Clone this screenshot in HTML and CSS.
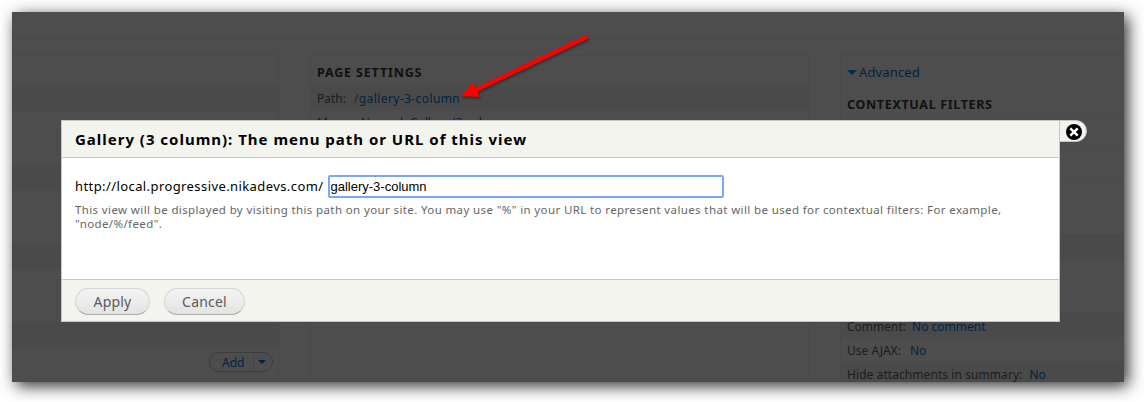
FILE: index.html
```html
<!DOCTYPE html>
<html lang="en">
<head>
<meta charset="utf-8">
<title>Gallery (3 column)</title>
<link rel="stylesheet" href="styles.css">
</head>
<body>
<div class="frame">
  <div class="topbar"></div>
  <div class="columns">
    <section class="col col-left">
      <div class="row head"></div>
      <div class="row odd"></div><div class="row tall"></div>
      <div class="row odd"></div><div class="row tall"></div>
      <div class="row odd"></div><div class="row tall"></div>
      <div class="row odd"></div>
      <div class="actions"><div class="add"><span class="add-label">Add</span><span class="add-more"><i class="caret small"></i></span></div></div>
    </section>
    <section class="col col-mid">
      <h3 class="col-title">PAGE SETTINGS</h3>
      <div class="setting odd"><span>Path:</span><a class="link path-link"><span class="slash">/</span>gallery-3-column</a></div>
      <div class="setting"><span>Menu:</span><a class="link">Normal: Gallery (3 colu</a></div>
    </section>
    <section class="col col-right">
      <div class="advanced"><i class="caret"></i><a class="link">Advanced</a></div>
      <h3 class="col-subtitle">CONTEXTUAL FILTERS</h3>
      <div class="filler f1"></div><div class="filler f2"></div><div class="filler f3"></div>
      <div class="setting odd exposed"><a class="link">Settings</a></div>
      <div class="filler f4"></div>
      <div class="setting odd comment"><span>Comment:</span><a class="link">No comment</a></div>
      <div class="setting ajax"><span>Use AJAX:</span><a class="link">No</a></div>
      <div class="setting odd hide"><span>Hide attachments in summary:</span><a class="link">No</a></div>
    </section>
  </div>
</div>

<svg class="arrow" width="140" height="76" viewBox="0 0 140 76">
  <path d="M1 66.300L12.700 52.300L15.200 57.800L126.300 4.700L128.400 8.500L17.500 61.500L19.600 66.800Z" fill="#f00"/>
</svg>

<div class="dialog">
  <header class="dialog-head"><h1>Gallery (3 column): The menu path or URL of this view</h1></header>
  <div class="dialog-body">
    <div class="field"><label>http://local.progressive.nikadevs.com/</label><input class="path-input" type="text" value="gallery-3-column"></div>
    <p class="help">This view will be displayed by visiting this path on your site. You may use "%" in your URL to represent values that will be used for contextual filters: For example,<br>"node/%/feed".</p>
  </div>
  <footer class="dialog-foot">
    <button class="btn apply">Apply</button>
    <button class="btn cancel">Cancel</button>
  </footer>
  <div class="close">
    <svg width="16" height="16" viewBox="0 0 16 16"><circle cx="8" cy="8" r="8" fill="#000"/><path d="M4.300 4.300L11.700 11.700M11.700 4.300L4.300 11.700" stroke="#fff" stroke-width="2.400"/></svg>
  </div>
</div>
</body>
</html>
```
FILE: styles.css
```css
* { box-sizing: border-box; }
body { margin: 0; width: 1144px; height: 402px; padding: 12px 20px 20px 12px; background: #fff; overflow: hidden; position: relative; font-family: "Noto Sans", "Open Sans", sans-serif; }
h1, h3, p { margin: 0; }
.frame { width: 1112px; height: 370px; background: #4d4d4d; box-shadow: 4px 4px 15px rgba(0,0,0,.82); display: flex; flex-direction: column; overflow: hidden; }
.topbar { height: 28px; border-bottom: 1px solid #494949; margin-bottom: 15px; flex: none; }
.columns { display: grid; grid-template-columns: 267px 499px 284px; column-gap: 31px; height: 327px; }
.col { border: 1px solid #494949; border-bottom: 0; font-size: 12px; color: #1c1c1c; overflow: hidden; white-space: nowrap; }
.col-left { border-left: 0; }
.col-right { border-right: 0; }
.row { height: 25px; }
.row.head { height: 30px; }
.row.tall { height: 54px; }
.odd { background: #4a4a4a; }
.actions { display: flex; justify-content: flex-end; padding: 4px 5px 0 0; }
.add { width: 64px; height: 20px; border: 1px solid #3d3d3d; border-radius: 10px; display: flex; align-items: center; color: #00233f; font-size: 12px; line-height: 17px; }
.add-label { width: 43px; padding-left: 12px; }
.add-more { border-left: 1px solid #424242; height: 14px; width: 18px; display: flex; align-items: center; padding-left: 4px; }
.caret { display: inline-block; border: 5px solid transparent; border-top-color: #00304b; border-bottom: 0; }
.caret.small { border-width: 4px 4px 0; border-top-color: #00233f; }
.col-title { font-size: 12.500px; letter-spacing: .84px; line-height: 17px; padding: 8px 0 5px 6px; height: 30px; color: #111; }
.setting { height: 24px; line-height: 26px; padding-left: 6px; display: flex; gap: 8px; }
.link { color: #00233f; }
.path-link { letter-spacing: .4px; }
.slash { color: #222; }
.advanced { display: flex; align-items: center; gap: 2px; height: 32px; padding-left: 6px; font-size: 13px; letter-spacing: .15px; }
.col-subtitle { font-size: 12.500px; letter-spacing: .67px; line-height: 17px; height: 31px; padding: 8px 0 0 6px; color: #111; border-bottom: 1px solid #494949; }
.filler { border-bottom: 1px solid #494949; }
.f1 { height: 31px; }
.f2 { height: 31px; }
.f3 { height: 54px; }
.exposed { padding-left: 173px; height: 25px; }
.f4 { height: 54px; }
.comment { gap: 6px; }
.ajax { gap: 9px; }
.hide { gap: 7px; letter-spacing: .07px; }
.arrow { position: absolute; left: 460px; top: 30px; filter: drop-shadow(1px 2px 1px rgba(0,0,0,.35)); }
.dialog { position: absolute; left: 61px; top: 120px; width: 999px; height: 202px; border: 1px solid #c4c6c3; background: #fff; display: flex; flex-direction: column; white-space: nowrap; }
.dialog-head { height: 37px; background: #f3f4ee; border-bottom: 1px solid #c8c8c8; padding: 8px 13px; flex: none; }
.dialog-head h1 { font-size: 15px; letter-spacing: .99px; line-height: 21px; color: #000; }
.dialog-body { flex: 1; padding: 16px 13px 0; }
.field { display: flex; align-items: center; height: 24px; }
.field label { width: 252.500px; font-size: 13px; letter-spacing: .41px; line-height: 18px; flex: none; color: #000; }
.path-input { width: 396px; height: 23px; border: 2px solid #79a9f1; border-radius: 2px; outline: 0; padding: 1px 1px; background: #fff; color: #000; font: 13px "Liberation Sans", Arial, sans-serif; }
.help { padding-top: 5px; font-size: 11.500px; letter-spacing: .38px; line-height: 14px; color: #666; }
.dialog-foot { height: 42px; background: #f3f4ee; border-top: 1px solid #c8c8c8; padding: 8px 13px; display: flex; gap: 14px; }
.btn { height: 27px; padding: 0; border: 1px solid #d5d5d5; border-bottom-color: #aaa; border-radius: 14px; background: linear-gradient(#f4f4f4, #e3e3e3); color: #5a5a5a; font: 14px/22px "Noto Sans", sans-serif; letter-spacing: .2px; text-align: center; }
.apply { width: 75px; }
.cancel { width: 81px; }
.close { position: absolute; left: 997px; top: -1px; width: 28px; height: 22px; background: #f3f4ee; border: 1px solid #c4c6c3; border-radius: 0 11px 11px 0; padding: 3px 6px; }
.close svg { display: block; }
```
